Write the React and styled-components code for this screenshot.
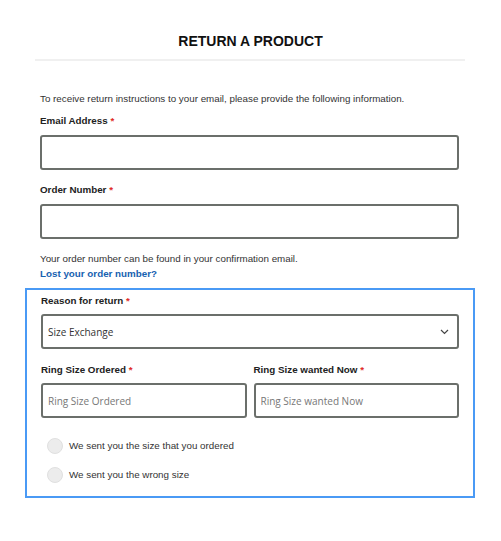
import React from "react";
import styled, { createGlobalStyle } from "styled-components";

const GlobalStyle = createGlobalStyle`
  body {
    margin: 0;
    background: #fff;
    font-family: "Liberation Sans", Arial, sans-serif;
    color: #333;
  }
`;

const Page = styled.div`
  width: 501px;
`;

const Title = styled.h1`
  margin: 0;
  padding-top: 32px;
  font-size: 14px;
  line-height: 18px;
  font-weight: 700;
  text-align: center;
  color: #111;
`;

const Divider = styled.hr`
  margin: 9px 36px 0 35px;
  border: 0;
  height: 2px;
  background: #f0f0f0;
`;

const Form = styled.form`
  padding: 0 42px 0 40px;
`;

const Note = styled.p`
  margin: ${(p) => p.$top || 0}px 0 0;
  font-size: 9.8px;
  line-height: 14px;
  color: #333;
`;

const Label = styled.label`
  display: block;
  margin-top: ${(p) => p.$top || 0}px;
  font-size: 9.8px;
  line-height: 14px;
  font-weight: 700;
  color: #222;

  &::after {
    content: " *";
    color: #e02b27;
  }
`;

const Input = styled.input`
  display: block;
  box-sizing: border-box;
  width: 100%;
  height: 35px;
  margin-top: 7px;
  padding: 0 5px;
  border: 2px solid #6b6f6b;
  border-radius: 3px;
  background: #fff;
  font-family: "Open Sans", sans-serif;
  font-size: 10px;
  color: #333;

  &::placeholder {
    color: #777;
  }
`;

const HelpLink = styled.a`
  display: block;
  margin-top: 1px;
  font-size: 9.8px;
  line-height: 14px;
  font-weight: 700;
  color: #1761b0;
  text-decoration: none;
`;

const Highlight = styled.div`
  margin: 7px -16px 0 -15px;
  padding: 4px 14px 13px;
  border: 2px solid #4a9af5;
`;

const Select = styled.div`
  box-sizing: border-box;
  height: 35px;
  margin-top: 6px;
  padding: 0 8px 0 5px;
  display: flex;
  align-items: center;
  justify-content: space-between;
  border: 2px solid #6b6f6b;
  border-radius: 3px;
  font-family: "Open Sans", sans-serif;
  font-size: 10px;
  color: #333;
`;

const Columns = styled.div`
  display: grid;
  grid-template-columns: 1fr 1fr;
  column-gap: 7px;
  margin-top: 14px;
`;

const Field = styled.div`
  & > input {
    margin-top: 6px;
  }
`;

const Options = styled.div`
  display: flex;
  flex-direction: column;
  gap: 13px;
  margin-top: 20px;
  padding-left: 6px;
`;

const Option = styled.label`
  display: flex;
  align-items: center;
  gap: 6px;
  font-size: 9.8px;
  line-height: 16px;
  color: #333;
`;

const Radio = styled.span`
  width: 16px;
  height: 16px;
  box-sizing: border-box;
  border-radius: 50%;
  background: #ececec;
  border: 1px solid #e0e0e0;
`;

const Chevron = () => (
  <svg width="9" height="6" viewBox="0 0 9 6">
    <polyline points="1,1 4.5,4.5 8,1" fill="none" stroke="#444" strokeWidth="1.2" />
  </svg>
);

export default function App() {
  return (
    <Page>
      <GlobalStyle />
      <Title>RETURN A PRODUCT</Title>
      <Divider />
      <Form>
        <Note $top={31}>
          To receive return instructions to your email, please provide the following information.
        </Note>
        <Label $top={8}>Email Address</Label>
        <Input type="email" />
        <Label $top={13}>Order Number</Label>
        <Input type="text" />
        <Note $top={13}>Your order number can be found in your confirmation email.</Note>
        <HelpLink href="#">Lost your order number?</HelpLink>

        <Highlight>
          <Label>Reason for return</Label>
          <Select>
            Size Exchange
            <Chevron />
          </Select>
          <Columns>
            <Field>
              <Label>Ring Size Ordered</Label>
              <Input placeholder="Ring Size Ordered" />
            </Field>
            <Field>
              <Label>Ring Size wanted Now</Label>
              <Input placeholder="Ring Size wanted Now" />
            </Field>
          </Columns>
          <Options>
            <Option>
              <Radio />
              We sent you the size that you ordered
            </Option>
            <Option>
              <Radio />
              We sent you the wrong size
            </Option>
          </Options>
        </Highlight>
      </Form>
    </Page>
  );
}
